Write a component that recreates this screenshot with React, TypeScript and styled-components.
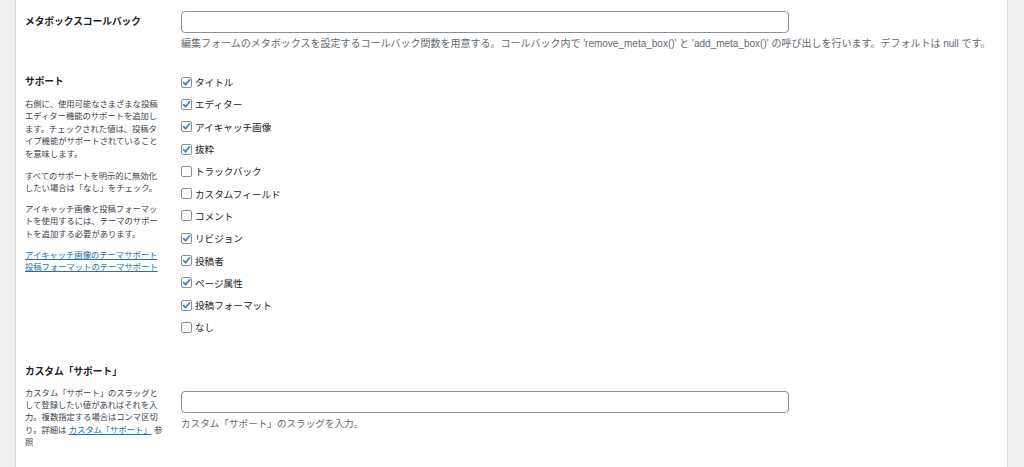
import React from "react";
import styled, { createGlobalStyle } from "styled-components";

const Global = createGlobalStyle`
  html, body { margin: 0; padding: 0; background: #f0f0f1; }
  body {
    font-family: "Liberation Sans", "Noto Sans CJK JP", sans-serif;
    color: #1d2327;
  }
`;

const Page = styled.div`
  display: flex;
  min-height: 467px;
`;

const Panel = styled.main`
  flex: 1;
  margin: 0 16px 0 15px;
  background: #fff;
  border-left: 1px solid #dcdcde;
  border-right: 1px solid #dcdcde;
  padding: 11px 0 0 9px;
  box-sizing: border-box;
  min-height: 467px;
`;

const Row = styled.section<{ $top: number }>`
  display: grid;
  grid-template-columns: 156px 1fr;
  margin-top: ${(p) => p.$top}px;
`;

const Side = styled.div`
  display: flex;
  flex-direction: column;
`;

const Heading = styled.h3`
  margin: 0;
  font-size: 9.7px;
  line-height: 22px;
  font-weight: 700;
  color: #1d2327;
  white-space: nowrap;
`;

const SideText = styled.p<{ $top?: number }>`
  margin: ${(p) => p.$top ?? 9}px 0 0;
  font-size: 8.3px;
  line-height: 12.4px;
  color: #3c434a;
  white-space: nowrap;
`;

const Link = styled.a`
  color: #2271b1;
  text-decoration: underline;
`;

const Field = styled.div<{ $pad?: number }>`
  display: flex;
  flex-direction: column;
  padding-top: ${(p) => p.$pad ?? 0}px;
`;

const TextInput = styled.input`
  width: 608px;
  height: 22px;
  box-sizing: border-box;
  border: 1px solid #8c8f94;
  border-radius: 4px;
  background: #fff;
  margin: 0;
  padding: 0 6px;
  font: inherit;
`;

const Hint = styled.p<{ $size?: number }>`
  margin: 4px 0 0;
  font-size: ${(p) => p.$size ?? 10}px;
  line-height: 14px;
  color: #646970;
  white-space: nowrap;
`;

const CheckList = styled.ul`
  list-style: none;
  margin: 0;
  padding: 0;
`;

const CheckItem = styled.li`
  display: flex;
  align-items: center;
  height: 22.3px;
  font-size: 9.6px;
  color: #1d2327;
  white-space: nowrap;
`;

const Box = styled.span`
  width: 11px;
  height: 11px;
  box-sizing: border-box;
  border: 1px solid #8c8f94;
  border-radius: 2px;
  background: #fff;
  margin-right: 3px;
  display: inline-flex;
  align-items: center;
  justify-content: center;
`;

const Check = ({ on }: { on: boolean }) => (
  <Box>
    {on && (
      <svg width="9" height="9" viewBox="0 0 9 9">
        <path d="M1.6 4.6 L3.6 6.8 L7.6 1.8" fill="none" stroke="#3582c4" strokeWidth="1.6" strokeLinecap="round" strokeLinejoin="round" />
      </svg>
    )}
  </Box>
);

const supports: [string, boolean][] = [
  ["タイトル", true],
  ["エディター", true],
  ["アイキャッチ画像", true],
  ["抜粋", true],
  ["トラックバック", false],
  ["カスタムフィールド", false],
  ["コメント", false],
  ["リビジョン", true],
  ["投稿者", true],
  ["ページ属性", true],
  ["投稿フォーマット", true],
  ["なし", false],
];

export default function App() {
  return (
    <>
      <Global />
      <Page>
        <Panel>
          <Row $top={0}>
            <Side>
              <Heading>メタボックスコールバック</Heading>
            </Side>
            <Field>
              <TextInput type="text" />
              <Hint>
                編集フォームのメタボックスを設定するコールバック関数を用意する。コールバック内で 'remove_meta_box()' と 'add_meta_box()' の呼び出しを行います。デフォルトは null です。
              </Hint>
            </Field>
          </Row>

          <Row $top={20}>
            <Side>
              <Heading>サポート</Heading>
              <SideText $top={5}>
                右側に、使用可能なさまざまな投稿<br />
                エディター機能のサポートを追加し<br />
                ます。チェックされた値は、投稿タ<br />
                イプ機能がサポートされていること<br />
                を意味します。
              </SideText>
              <SideText $top={10}>
                すべてのサポートを明示的に無効化<br />
                したい場合は「なし」をチェック。
              </SideText>
              <SideText $top={8}>
                アイキャッチ画像と投稿フォーマッ<br />
                トを使用するには、テーマのサポー<br />
                トを追加する必要があります。
              </SideText>
              <SideText $top={9}>
                <Link href="#">アイキャッチ画像のテーマサポート</Link>
                <br />
                <Link href="#">投稿フォーマットのテーマサポート</Link>
              </SideText>
            </Side>
            <Field>
              <CheckList>
                {supports.map(([label, on]) => (
                  <CheckItem key={label}>
                    <Check on={on} />
                    {label}
                  </CheckItem>
                ))}
              </CheckList>
            </Field>
          </Row>

          <Row $top={22}>
            <Side>
              <Heading>カスタム「サポート」</Heading>
              <SideText $top={4}>
                カスタム「サポート」のスラッグと<br />
                して登録したい値があればそれを入<br />
                力。複数指定する場合はコンマ区切<br />
                り。詳細は <Link href="#">カスタム「サポート」</Link> 参<br />
                照
              </SideText>
            </Side>
            <Field $pad={30}>
              <TextInput type="text" />
              <Hint $size={9.6}>カスタム「サポート」のスラッグを入力。</Hint>
            </Field>
          </Row>
        </Panel>
      </Page>
    </>
  );
}
